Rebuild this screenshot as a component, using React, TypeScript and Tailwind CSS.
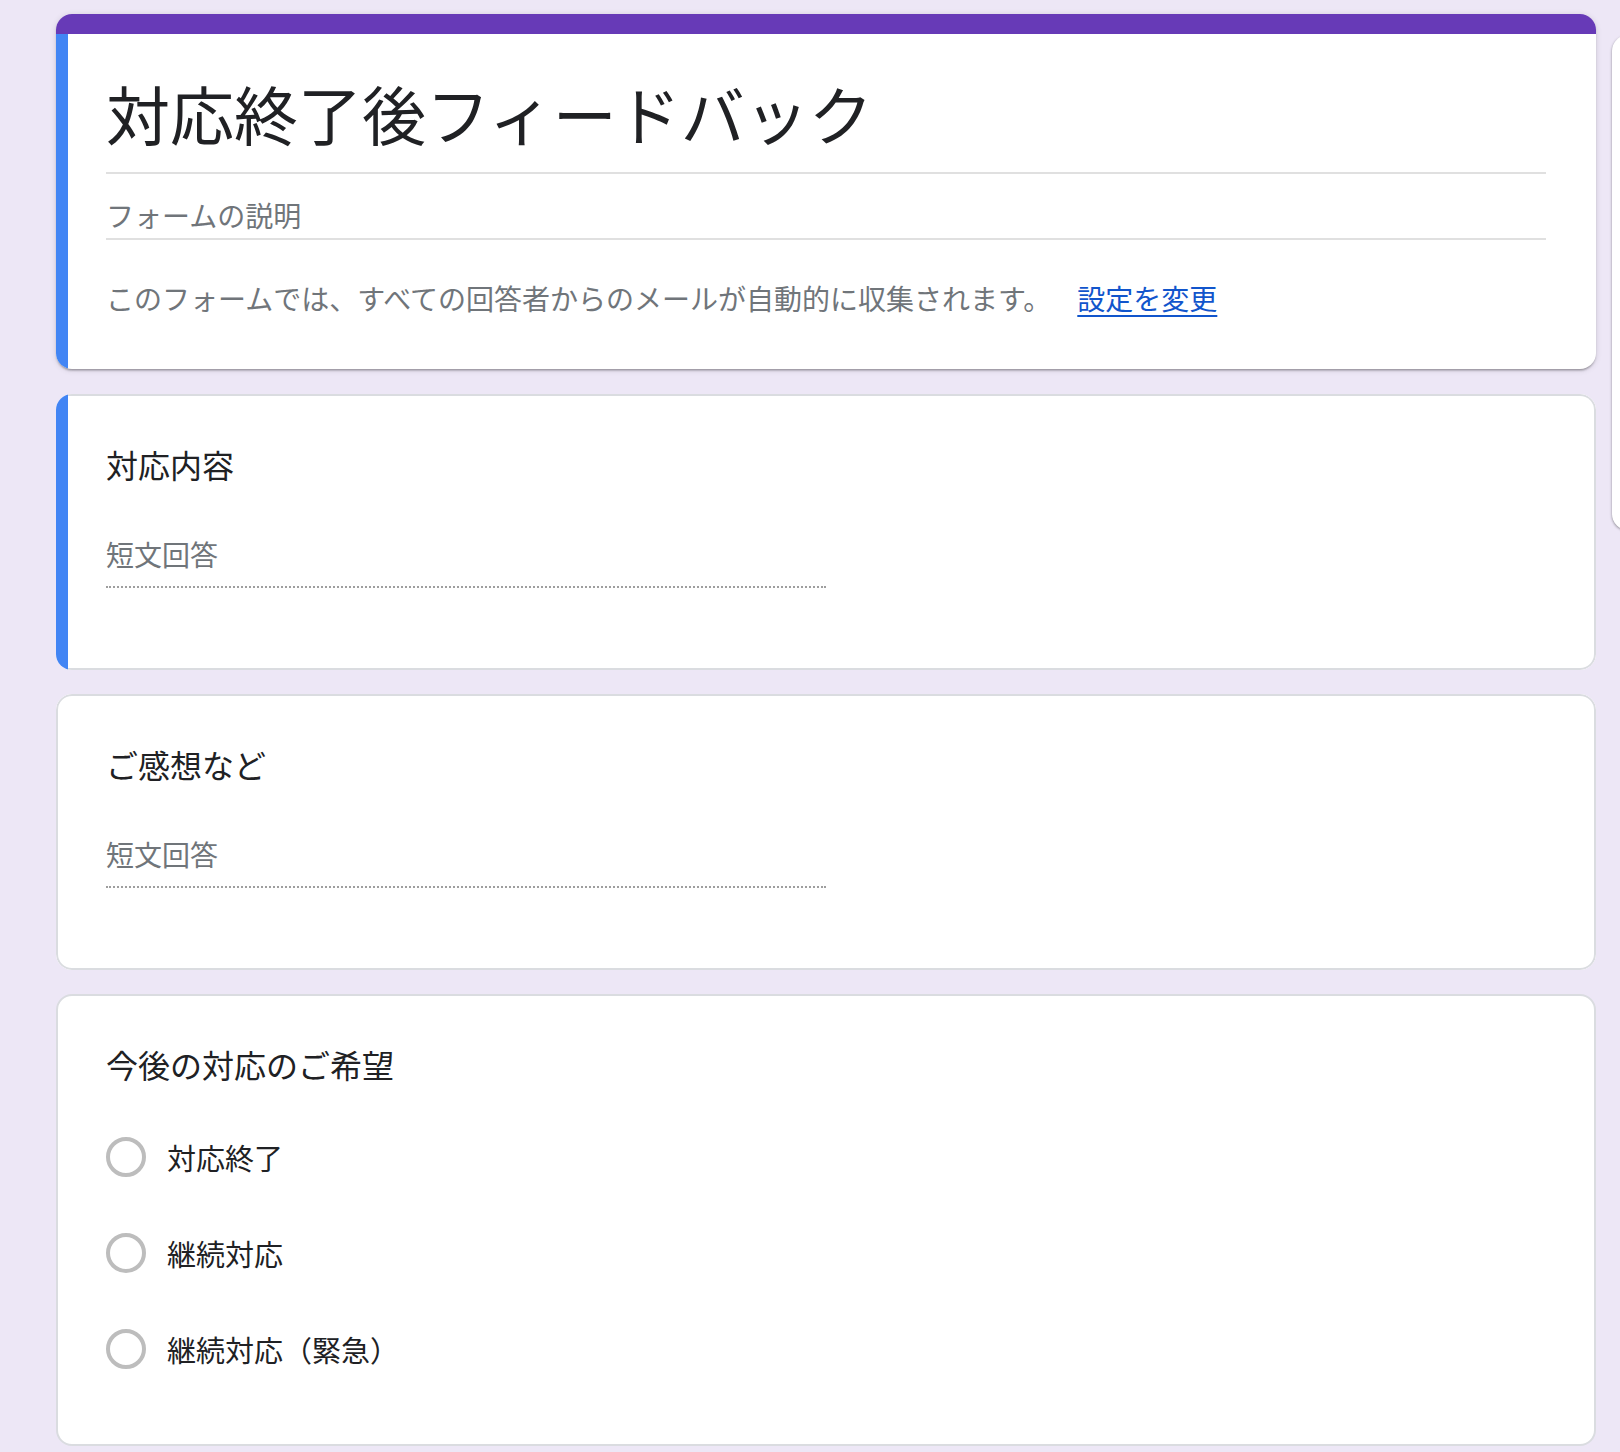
import React from 'react';

const font = { fontFamily: '"Noto Sans CJK JP", "Noto Sans", sans-serif' };

const ShortAnswer: React.FC<{ title: string; active?: boolean; className?: string }> = ({ title, active, className }) => (
  <div className={'flex rounded-2xl overflow-hidden bg-white ' + (className ?? '')}>
    {active && <div className="w-[12px] shrink-0 bg-[#4285f4]" />}
    <div
      className={
        active
          ? 'flex-1 border-y-2 border-r-2 border-[#dadce0] rounded-r-2xl pl-[38px] pr-[48px] pt-[44px] pb-[80px]'
          : 'flex-1 border-2 border-[#dadce0] rounded-2xl pl-[48px] pr-[48px] pt-[44px] pb-[80px]'
      }
    >
      <div className="text-[32px] leading-[48px] text-[#202124]">{title}</div>
      <div className="mt-[46px] w-[720px] border-b-2 border-dotted border-[#9e9e9e] pb-[12px]">
        <span className="block text-[28px] leading-[40px] text-[#70757a]">短文回答</span>
      </div>
    </div>
  </div>
);

const RadioRow: React.FC<{ label: string }> = ({ label }) => (
  <div className="flex items-center h-[96px]">
    <div className="w-[40px] h-[40px] rounded-full border-[4px] border-[#bdbdbd] shrink-0" />
    <span className="ml-[21px] text-[29px] leading-[40px] text-[#202124]">{label}</span>
  </div>
);

export default function App() {
  return (
    <div className="min-h-[1452px] w-[1620px] overflow-hidden bg-[#ede7f6] flex items-start pl-[56px] pt-[14px]" style={font}>
      <div className="w-[1540px] shrink-0 flex flex-col pb-[10px]">
        {/* header card */}
        <div className="rounded-2xl overflow-hidden bg-white shadow-[0_2px_2px_0_rgba(0,0,0,0.14),0_3px_2px_-2px_rgba(0,0,0,0.2),0_1px_6px_0_rgba(0,0,0,0.12)]">
          <div className="h-[20px] bg-[#673ab7]" />
          <div className="flex">
            <div className="w-[12px] shrink-0 bg-[#4285f4]" />
            <div className="flex-1 pl-[38px] pr-[50px] pt-[38px] pb-[51px]">
              <div className="border-b-2 border-[#e0e0e0] pb-[20px]">
                <h1 className="text-[64px] leading-[80px] text-[#202124]">対応終了後フィードバック</h1>
              </div>
              <div className="border-b-2 border-[#e0e0e0] pt-[21px] pb-[3px]">
                <div className="text-[28px] leading-[40px] text-[#70757a]">フォームの説明</div>
              </div>
              <div className="mt-[38px] text-[28px] leading-[40px] text-[#70757a]">
                このフォームでは、すべての回答者からのメールが自動的に収集されます。
                <a href="#" className="ml-[26px] text-[#1155cc] underline decoration-2 underline-offset-[5px]">設定を変更</a>
              </div>
            </div>
          </div>
        </div>

        <ShortAnswer title="対応内容" active className="mt-[25px]" />
        <ShortAnswer title="ご感想など" className="mt-[24px]" />

        <div className="mt-[24px] rounded-2xl bg-white border-2 border-[#dadce0] pl-[48px] pr-[48px] pt-[44px] pb-[47px]">
          <div className="text-[32px] leading-[48px] text-[#202124]">今後の対応のご希望</div>
          <div className="mt-[21px] flex flex-col">
            <RadioRow label="対応終了" />
            <RadioRow label="継続対応" />
            <RadioRow label="継続対応（緊急）" />
          </div>
        </div>
      </div>

      {/* side toolbar, mostly off-screen */}
      <div className="ml-[16px] mt-[21px] w-[96px] h-[495px] shrink-0 rounded-2xl bg-white shadow-[0_1px_3px_0_rgba(0,0,0,0.3),0_1px_2px_0_rgba(0,0,0,0.15)]" />
    </div>
  );
}
